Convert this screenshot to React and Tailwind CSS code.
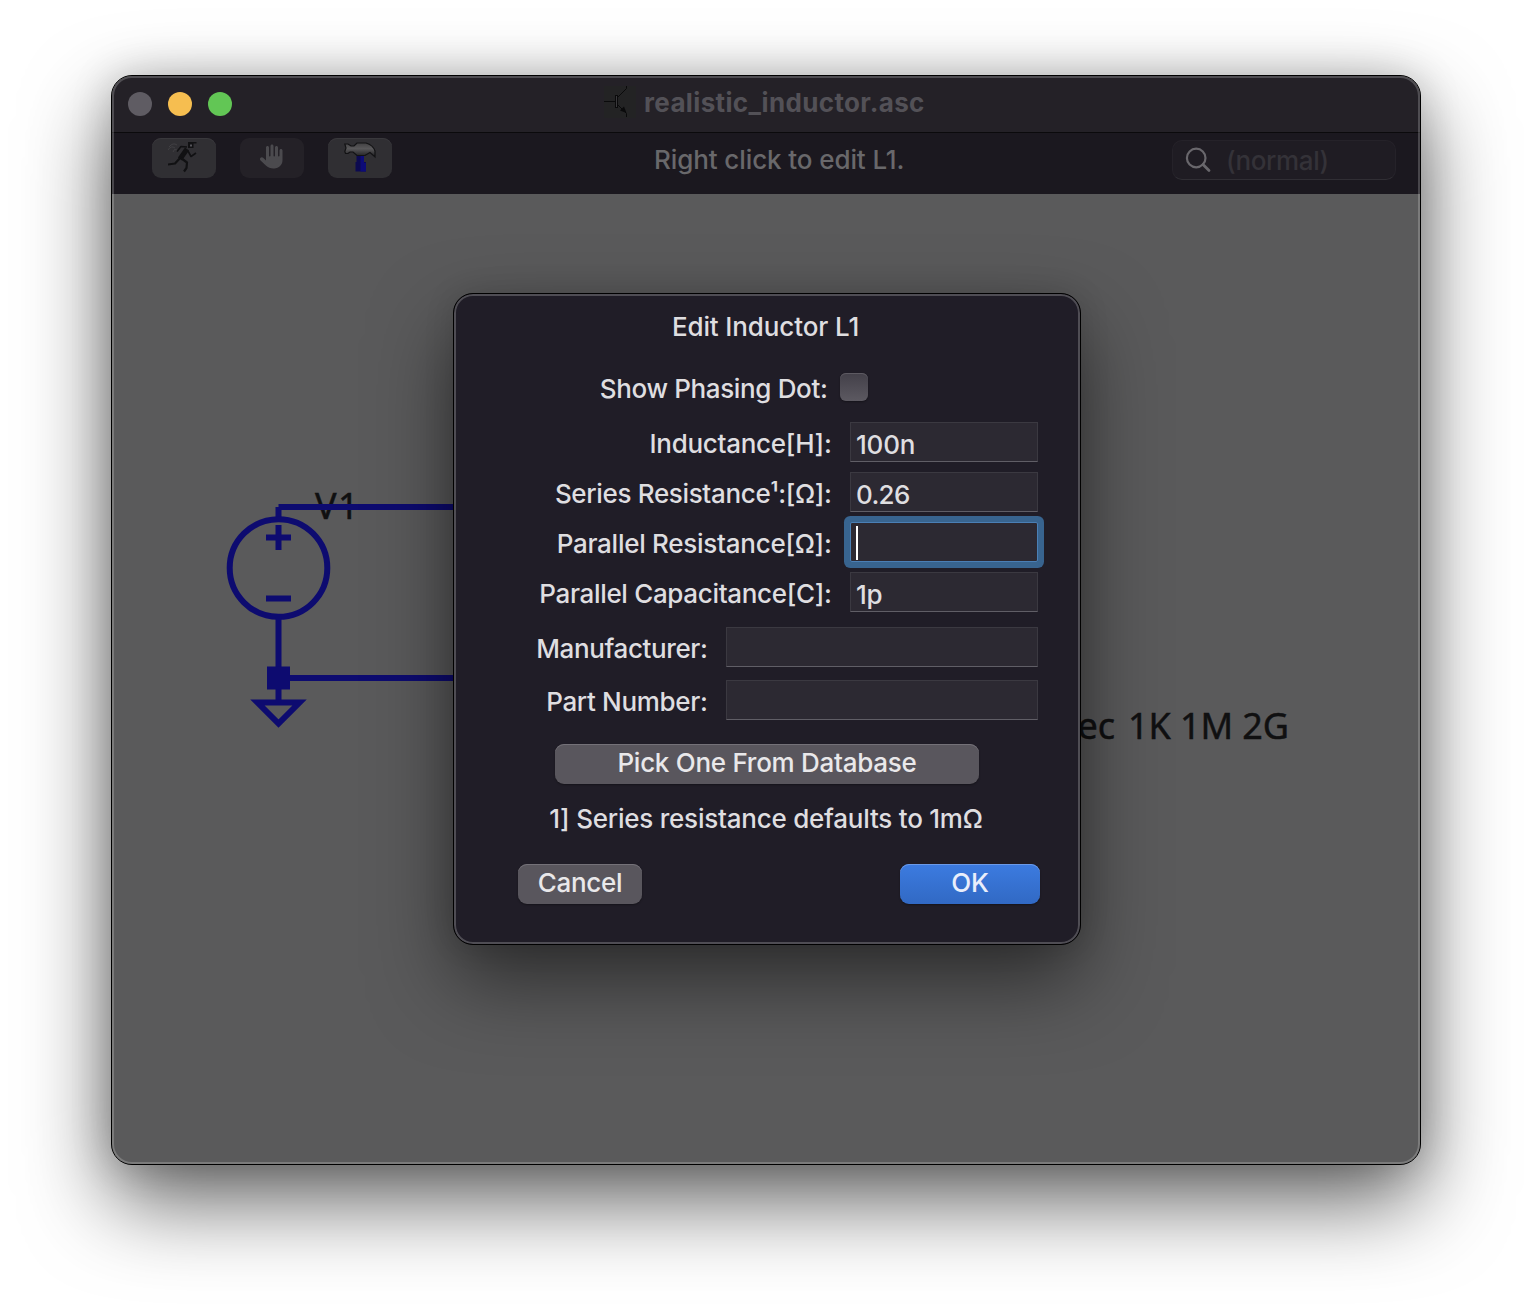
import { FaHand } from 'react-icons/fa6';

function RunnerIcon() {
  return (
    <svg width="32" height="32" viewBox="0 0 32 32" fill="none">
      <path d="M1 5 Q5 0 9 3 M0 8 Q3 3 7 6 M5 10 Q6 6 9 8" stroke="#414044" strokeWidth="1" />
      <g stroke="#111113" strokeLinejoin="round">
        <path d="M19 7 L12 17" strokeWidth="5" />
        <path d="M19 5 L13 4.5 L9 9.5" strokeWidth="1.6" />
        <path d="M20 9 L23 14.5 L28 11" strokeWidth="1.6" />
        <path d="M13 15 L7 21.5 L0 22.5" strokeWidth="2.2" />
        <path d="M13 16 L19 20.5 L18.5 26 L16 29.5" strokeWidth="2.2" />
      </g>
      <path d="M20 0 H28.5 V1.6 H25.5 V6 H20 Z" fill="#111113" />
      <rect x="22" y="2.5" width="2" height="2" fill="#55545a" />
    </svg>
  );
}

function HammerIcon() {
  return (
    <svg width="32" height="32" viewBox="0 0 32 32">
      <defs>
        <linearGradient id="hammerHead" x1="0" y1="0" x2="0" y2="1">
          <stop offset="0" stopColor="#414042" />
          <stop offset="0.4" stopColor="#59585a" />
          <stop offset="1" stopColor="#1c1c1e" />
        </linearGradient>
      </defs>
      <path d="M12.5 13 H20 V20 H22 V29.5 H11.5 V20 H12.5 Z" fill="#0c0a50" />
      <path d="M16.5 14 H20 V21 H22 V29.5 H16.5 Z" fill="#0d0b78" />
      <path
        d="M0.8 2 H4 L7 4 H10 L13 1 H22 Q29 3 31 9 V15 L26 10.5 L21 13.5 H13 L9 10 H6 L4 11.5 H1.5 L0.8 9.5 L2 6 Z"
        fill="url(#hammerHead)"
        stroke="#121214"
        strokeWidth="1.2"
      />
    </svg>
  );
}

function TransistorIcon() {
  return (
    <svg width="32" height="32" viewBox="0 0 32 32" fill="none" className="bg-[#232324]">
      <g stroke="#0a0a0b" strokeWidth="1">
        <path d="M0 15.5 H12" />
        <rect x="11.5" y="9.5" width="2" height="12" fill="#3a393c" />
        <path d="M14 11 L22.5 2.5 V0 M14 19 L22.5 27.5 V31" />
      </g>
      <path d="M22.5 27 L16 24.5 L20 20.5 Z" fill="#0a0a0b" />
    </svg>
  );
}

function Circuit() {
  return (
    <svg className="absolute left-0 top-0" width="1308" height="969" viewBox="112 194 1308 969" fill="none">
      <g fill="#101011" stroke="#101011" strokeWidth="0.5" className="font-['Noto_Sans',sans-serif] text-[36px]">
        <text x="315" y="519" className="tracking-[1.5px]">V1</text>
        <text x="1115" y="739" textAnchor="end">ec</text>
        <text x="1128" y="739" className="tracking-[-0.1px]">1K 1M 2G</text>
      </g>
      <g stroke="#0d0b70" strokeWidth="6">
        <path d="M278.5 507 H460 M278.5 507 V518" />
        <circle cx="278.5" cy="568" r="48.8" />
        <path d="M266 537.5 H291 M278.5 525 V550 M266 598.5 H291" />
        <path d="M278.5 617 V702 M278.5 678 H460" />
        <path d="M257.5 702.5 H299.5 L278.5 723.5 Z" />
      </g>
      <rect x="267" y="666.5" width="23" height="23" fill="#0d0b70" />
    </svg>
  );
}

function Field({ value, focused, width = 'w-[188px]', tracking = 'tracking-[-0.2px]' }) {
  return (
    <div
      className={`${width} ${tracking} h-10 shrink-0 bg-[#2c2932] border pl-[5px] leading-[44px] flex ${
        focused
          ? 'border-[#4a7fb5] shadow-[0_0_0_6px_#38648f] rounded-[2px]'
          : 'border-[#3b3941] border-b-[#605e66]'
      }`}
    >
      {focused ? <span className="mt-[3px] h-[34px] w-[2px] bg-white" /> : value}
    </div>
  );
}

function Row({ label, className = '', labelTracking = 'tracking-[-0.27px]', ...field }) {
  return (
    <div className={`flex h-10 justify-end gap-[18.5px] ${className}`}>
      <span className={`leading-[44px] whitespace-nowrap ${labelTracking}`}>{label}</span>
      <Field {...field} />
    </div>
  );
}

const grayButton =
  'h-10 rounded-[9px] bg-[#59565d] text-[#e9e8ea] text-center leading-[36px] pb-[2px] shadow-[inset_0_1px_0_#747178,0_1px_2px_rgba(0,0,0,0.35)]';

function Dialog() {
  return (
    <div className="absolute left-[341px] top-[217px] w-[628px] h-[652px] rounded-[20px] bg-[#201d27] border border-black shadow-[inset_0_0_0_2px_#4f4d54,0_36px_80px_rgba(0,0,0,0.5),0_0_30px_rgba(0,0,0,0.12)] pt-[17px] pr-[42px] text-[26px] font-[450] text-[#dfdee0] tracking-[-0.27px]">
      <h2 className="-mr-[42px] text-center leading-8 tracking-[-0.12px] pr-[3px]">Edit Inductor L1</h2>
      <div className="mt-[30px] flex h-7 justify-end gap-[12.5px] pr-[170px]">
        <span className="leading-8 whitespace-nowrap tracking-[-0.35px]">Show Phasing Dot:</span>
        <span className="size-7 rounded-[6px] bg-linear-to-b from-[#434049] to-[#5c5961] shadow-[inset_0_1px_0_#5d5a62,0_1px_2px_rgba(0,0,0,0.35)]" />
      </div>
      <Row className="mt-[21px]" label="Inductance[H]:" value="100n" />
      <Row className="mt-[10px]" label="Series Resistance¹:[Ω]:" value="0.26" labelTracking="tracking-[-0.34px]" tracking="tracking-[-0.7px]" />
      <Row className="mt-[10px]" label="Parallel Resistance[Ω]:" focused />
      <Row className="mt-[10px]" label="Parallel Capacitance[C]:" value="1p" labelTracking="tracking-[-0.33px]" />
      <Row className="mt-[15px]" label="Manufacturer:" width="w-[312px]" labelTracking="tracking-[-0.38px]" />
      <Row className="mt-[13px]" label="Part Number:" width="w-[312px]" labelTracking="tracking-[-0.33px]" />
      <button className={`${grayButton} block mt-6 ml-[101px] w-[424px]`}>Pick One From Database</button>
      <p className="mt-[19px] -mr-[42px] pr-0.5 text-center leading-8 tracking-[-0.23px]">
        1] Series resistance defaults to 1mΩ
      </p>
      <div className="mt-[29px] ml-16 -mr-[2px] flex justify-between">
        <button className={`${grayButton} w-[124px]`}>Cancel</button>
        <button className="h-10 w-[140px] rounded-[9px] bg-linear-to-b from-[#3c7be0] to-[#3169c4] text-[#e9eefb] leading-[36px] pb-[2px] shadow-[inset_0_1px_0_#6b9ae8,0_1px_2px_rgba(0,0,0,0.35)]">
          OK
        </button>
      </div>
    </div>
  );
}

function TitleBar() {
  return (
    <header className="flex h-14 items-start bg-[#242127] pl-4">
      <div className="mt-4 flex gap-4">
        <span className="size-6 rounded-full bg-[#5f5c63]" />
        <span className="size-6 rounded-full bg-[#f6be50]" />
        <span className="size-6 rounded-full bg-[#62c655]" />
      </div>
      <div className="ml-[372px] mt-[10px] flex gap-2">
        <TransistorIcon />
        <h1 className="text-[26px] font-bold leading-[34px] tracking-[0.35px] text-[#535157]">
          realistic_inductor.asc
        </h1>
      </div>
    </header>
  );
}

function Toolbar() {
  const tool = 'flex h-10 w-16 justify-center rounded-[9px] pt-1';
  return (
    <div className="flex h-[62px] border-t border-[#0b0a0c] bg-[#1b181f] pl-10 pr-6">
      <div className="mt-[5px] flex gap-6">
        <span className={`${tool} bg-[#302f33] shadow-[inset_0_1px_0_#39383c]`}><RunnerIcon /></span>
        <span className={`${tool} bg-[#242127] text-[#4b4a4e]`}><FaHand className="mt-[1px] h-[27px] w-[24px]" /></span>
        <span className={`${tool} bg-[#302f33] shadow-[inset_0_1px_0_#39383c]`}><HammerIcon /></span>
      </div>
      <p className="ml-[262px] mt-[11px] whitespace-nowrap text-[26px] font-[450] leading-8 tracking-[-0.1px] text-[#69686b]">Right click to edit L1.</p>
      <label className="ml-auto mt-[7px] flex h-10 w-56 rounded-[10px] border border-[#252229] border-b-[#302e34] bg-[#1f1c23] pl-3">
        <svg width="28" height="28" viewBox="0 0 28 28" fill="none" stroke="#69676c" className="mt-[6px]">
          <circle cx="11.2" cy="11" r="9.3" strokeWidth="2.2" />
          <path d="M18 17.5 L24 23.5" strokeWidth="2.8" strokeLinecap="round" />
        </svg>
        <span className="ml-[13px] text-[26px] font-[450] leading-[40px] text-[#343238] tracking-[-0.35px]">(normal)</span>
      </label>
    </div>
  );
}

export default function App() {
  return (
    <div className="h-[1312px] w-[1532px] overflow-hidden bg-white pl-[111px] pt-[75px] font-[Inter,sans-serif]">
      <div className="relative h-[1090px] w-[1310px] rounded-[21px] border border-black bg-[#5a5a5b] shadow-[0_36px_86px_rgba(0,0,0,0.62),0_0_40px_rgba(0,0,0,0.18)]">
        <div className="flex h-full flex-col overflow-hidden rounded-[20px]">
          <TitleBar />
          <Toolbar />
          <main className="relative flex-1">
            <Circuit />
          </main>
        </div>
        <div className="pointer-events-none absolute inset-0 rounded-[20px] shadow-[inset_0_0_0_2px_rgba(255,255,255,0.2)]" />
        <Dialog />
      </div>
    </div>
  );
}
